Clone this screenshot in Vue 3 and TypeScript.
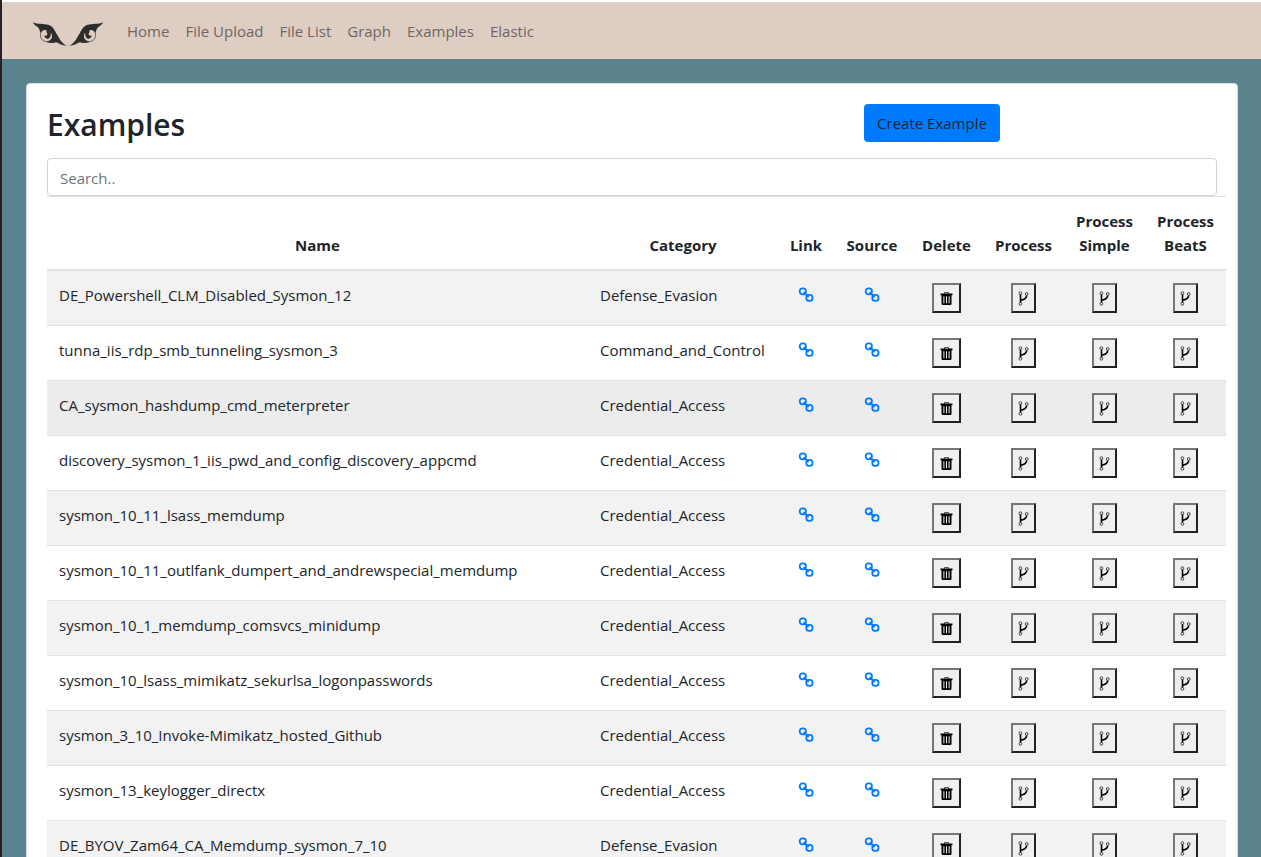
<script setup lang="ts">
import { computed, ref } from 'vue'

interface Example {
  name: string
  category: string
}

const navLinks: string[] = ['Home', 'File Upload', 'File List', 'Graph', 'Examples', 'Elastic']

const examples: Example[] = [
  { name: 'DE_Powershell_CLM_Disabled_Sysmon_12', category: 'Defense_Evasion' },
  { name: 'tunna_iis_rdp_smb_tunneling_sysmon_3', category: 'Command_and_Control' },
  { name: 'CA_sysmon_hashdump_cmd_meterpreter', category: 'Credential_Access' },
  { name: 'discovery_sysmon_1_iis_pwd_and_config_discovery_appcmd', category: 'Credential_Access' },
  { name: 'sysmon_10_11_lsass_memdump', category: 'Credential_Access' },
  { name: 'sysmon_10_11_outlfank_dumpert_and_andrewspecial_memdump', category: 'Credential_Access' },
  { name: 'sysmon_10_1_memdump_comsvcs_minidump', category: 'Credential_Access' },
  { name: 'sysmon_10_lsass_mimikatz_sekurlsa_logonpasswords', category: 'Credential_Access' },
  { name: 'sysmon_3_10_Invoke-Mimikatz_hosted_Github', category: 'Credential_Access' },
  { name: 'sysmon_13_keylogger_directx', category: 'Credential_Access' },
  { name: 'DE_BYOV_Zam64_CA_Memdump_sysmon_7_10', category: 'Defense_Evasion' },
]

const processActions: string[] = ['Process', 'Process Simple', 'Process BeatS']

const search = ref('')
const active = ref('CA_sysmon_hashdump_cmd_meterpreter')
const visible = computed(() =>
  examples.filter((e) => `${e.name} ${e.category}`.toLowerCase().includes(search.value.toLowerCase())),
)
</script>

<template>
  <div class="page">
    <nav class="navbar">
      <a class="brand" href="#" aria-label="Start page">
        <svg width="70" height="24" viewBox="24 30 210 72" aria-hidden="true">
          <defs>
            <g id="owl-eye">
              <path
                fill="#2d2d2d"
                d="M24 31C38 38 55 34 72 39C84 43 89 56 97 69C104 82 113 97 125 101C113 102 104 95 94 91C84 94 72 93 62 89C75 88 82 81 81 71C80 62 73 55 62 54C55 53 49 57 45 63C45 53 42 48 35 43C30 40 26 36 24 31Z"
              />
              <circle cx="65" cy="70" r="19" fill="none" stroke="#2d2d2d" stroke-width="2" />
              <path
                fill="#2d2d2d"
                d="M66 50L80 60C76 62 78 66 77 70C76 78 71 81 66 80C60 79 57 74 59 70C63 73 68 70 67 66C66 62 62 58 66 50Z"
              />
            </g>
          </defs>
          <use href="#owl-eye" />
          <use href="#owl-eye" transform="matrix(-1 0 0 1 258 0)" />
        </svg>
      </a>
      <a v-for="item in navLinks" :key="item" class="nav-link" href="#">{{ item }}</a>
    </nav>

    <main class="content">
      <section class="card">
        <div class="heading">
          <h1>Examples</h1>
          <button type="button" class="create">Create Example</button>
        </div>
        <input v-model="search" class="search" type="text" placeholder="Search.." aria-label="Search examples" />
        <table>
          <colgroup>
            <col />
            <col class="col-category" />
            <col class="col-link" />
            <col class="col-source" />
            <col class="col-delete" />
            <col v-for="action in processActions" :key="action" class="col-process" />
          </colgroup>
          <thead>
            <tr>
              <th scope="col">Name</th>
              <th scope="col">Category</th>
              <th scope="col">Link</th>
              <th scope="col">Source</th>
              <th scope="col">Delete</th>
              <th v-for="action in processActions" :key="action" scope="col">{{ action }}</th>
            </tr>
          </thead>
          <tbody>
            <tr v-for="row in visible" :key="row.name" :class="{ active: row.name === active }">
              <td>{{ row.name }}</td>
              <td>{{ row.category }}</td>
              <td v-for="kind in ['Link', 'Source']" :key="kind" class="center">
                <a class="icon-link" href="#" :aria-label="`${kind} of ${row.name}`">
                  <svg width="16" height="16" viewBox="0 0 16 16" fill="none" stroke="#007bff" stroke-width="1.8">
                    <rect x="1.7" y="1.3" width="6.2" height="6" rx="2.7" />
                    <rect x="8.3" y="7.9" width="6.2" height="6" rx="2.7" />
                    <path stroke-width="2" d="M5.6 5.2L10.6 10" />
                  </svg>
                </a>
              </td>
              <td class="center">
                <button type="button" class="tool trash" :aria-label="`Delete ${row.name}`">
                  <svg width="13" height="15" viewBox="0 0 13 15">
                    <path fill="none" stroke="#555" d="M4.5 3V1.5H8.5V3" />
                    <path
                      fill="#000"
                      fill-rule="evenodd"
                      d="M.5 2.6H12.5V4.2H11.5V12.8Q11.5 14 10.2 14H2.8Q1.5 14 1.5 12.8V4.2H.5ZM3.4 5.2V12.2H4.4V5.2ZM6 5.2V12.2H7V5.2ZM8.6 5.2V12.2H9.6V5.2Z"
                    />
                  </svg>
                </button>
              </td>
              <td v-for="action in processActions" :key="action" class="center">
                <button type="button" class="tool branch" :aria-label="`${action}: ${row.name}`">
                  <svg width="11" height="15" viewBox="0 0 11 15" fill="none" stroke="#000">
                    <circle cx="2.4" cy="2.2" r="1.4" stroke="#444" />
                    <circle cx="2.4" cy="12.8" r="1.4" stroke="#444" />
                    <circle cx="8.7" cy="3" r="1.4" stroke="#444" />
                    <path stroke-width="1.6" d="M2.5 3.6V11.4M8.6 4.4C8.6 8 5.4 8.4 2.8 9.2" />
                  </svg>
                </button>
              </td>
            </tr>
          </tbody>
        </table>
      </section>
    </main>
  </div>
</template>

<style>
html,
body {
  height: 100%;
}
#app {
  height: 100%;
}
</style>

<style scoped>
* {
  box-sizing: border-box;
}
.page {
  height: 100%;
  overflow: hidden;
  border-left: 2px solid #232227;
  background: #5b838d;
  color: #212529;
  font-family: 'Segoe UI', 'Open Sans', 'Noto Sans', sans-serif;
  font-size: 15px;
  line-height: 24px;
}
.navbar {
  display: flex;
  align-items: center;
  gap: 16px;
  height: 59px;
  padding: 0 31px;
  border-top: 2px solid #fff;
  background: #decdc3;
  box-shadow: inset 0 1px #d5d5da;
}
.brand {
  display: flex;
  margin-right: 8px;
  padding-top: 6px;
}
.nav-link {
  color: #6f6661;
  text-decoration: none;
}
.content {
  padding: 24px 23px 24px 24px;
}
.card {
  padding: 20px;
  border: 1px solid #d6dfe2;
  border-radius: 4px;
  background: #fff;
}
.heading {
  display: grid;
  grid-template-columns: 1fr 1fr;
  column-gap: 30px;
  align-items: start;
  height: 54px;
}
h1 {
  margin: 0;
  font-size: 30px;
  font-weight: 600;
  line-height: 42px;
}
.create {
  justify-self: center;
  height: 38px;
  padding: 0 13px;
  border: 0;
  border-radius: 4px;
  background: #007bff;
  color: #212529;
  font: inherit;
}
.search {
  display: block;
  width: 100%;
  height: 38px;
  padding: 2px 12px 0;
  border: 1px solid #ced4da;
  border-radius: 4px;
  background: #fff;
  color: #495057;
  font: inherit;
}
.search::placeholder {
  color: #6c757d;
  opacity: 1;
}
table {
  width: calc(100% + 9px);
  border-collapse: collapse;
  table-layout: fixed;
}
.col-category {
  width: 190px;
}
.col-link {
  width: 56px;
}
.col-source {
  width: 76px;
}
.col-delete {
  width: 73px;
}
.col-process {
  width: 81px;
}
th {
  padding: 12px 8px;
  border-top: 1px solid #dee2e6;
  border-bottom: 2px solid #dee2e6;
  font-weight: 700;
  vertical-align: bottom;
}
td {
  height: 55px;
  padding: 12px;
  border-top: 1px solid #dee2e6;
  vertical-align: top;
  white-space: nowrap;
}
td.center {
  padding: 12px 0;
  text-align: center;
}
tbody tr:nth-child(odd) {
  background: #f2f2f2;
}
tbody tr.active {
  background: #ececec;
}
.icon-link {
  display: flex;
  justify-content: center;
  padding-top: 4px;
}
.tool {
  display: inline-flex;
  align-items: center;
  justify-content: center;
  height: 30px;
  padding: 0;
  border: 2px solid;
  border-color: #767676 #212121 #212121 #767676;
  background: #efefef;
  vertical-align: top;
}
.trash {
  width: 29px;
}
.branch {
  width: 25px;
}
</style>
